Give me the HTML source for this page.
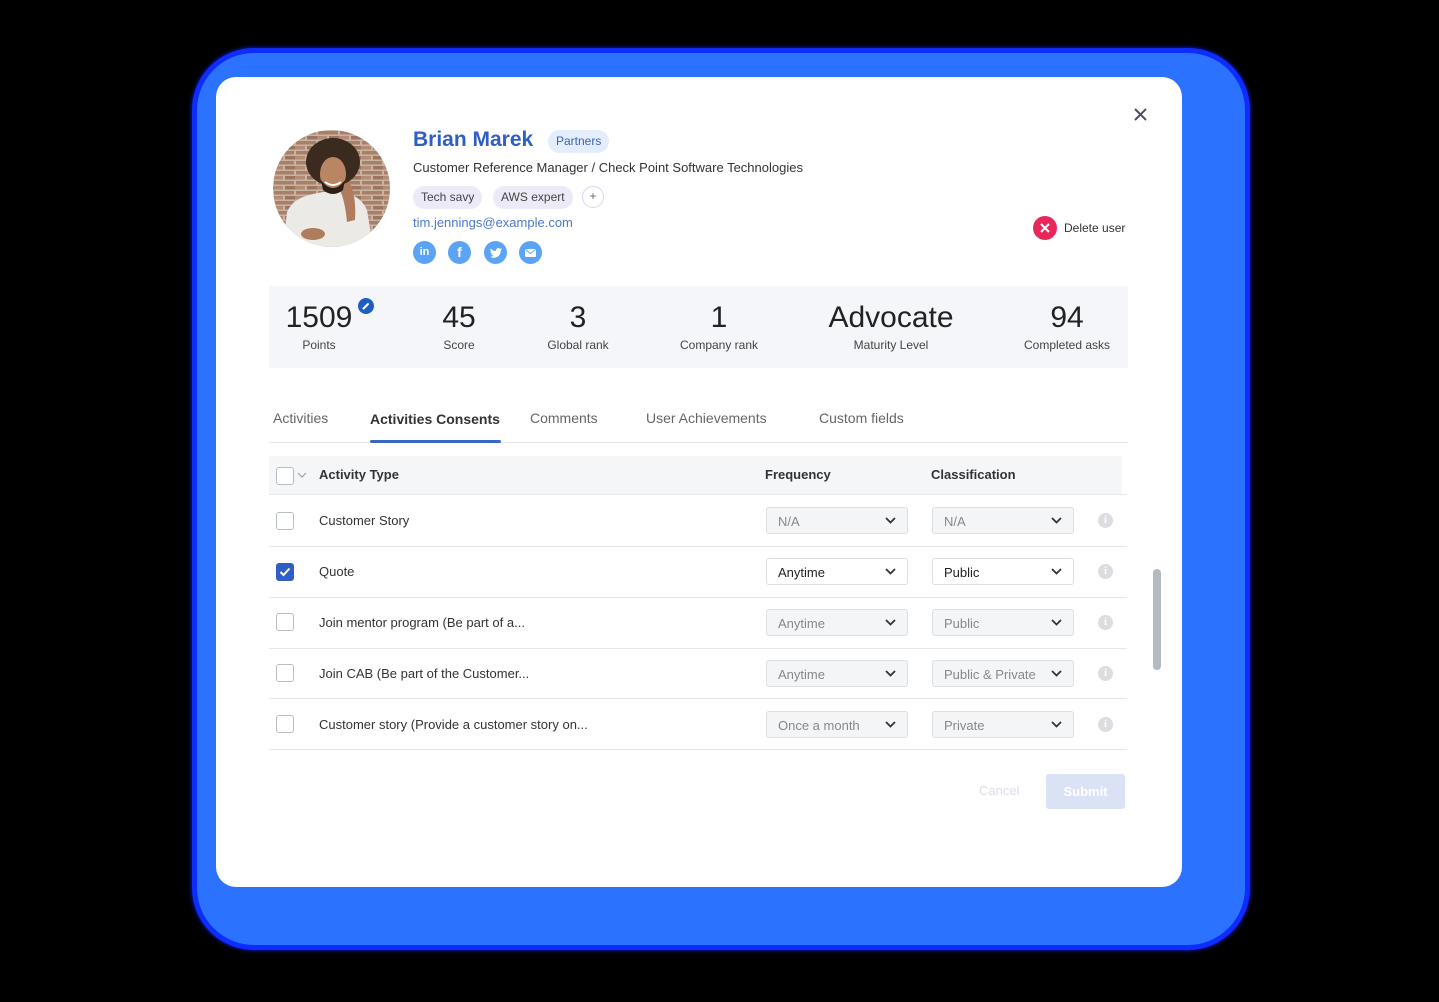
<!DOCTYPE html>
<html><head><meta charset="utf-8"><style>
*{box-sizing:border-box;margin:0;padding:0}
body{width:1439px;height:1002px;background:#000;position:relative;overflow:hidden;font-family:"Liberation Sans",sans-serif;color:#333}
.a{position:absolute}
.glow{left:192px;top:48px;width:1058px;height:902px;border-radius:62px;background:#2a72ff;border:5px solid #0d2cff;box-shadow:0 0 4px #0a20ff}
.card{left:216px;top:77px;width:966px;height:810px;border-radius:20px;background:#fff}
.c{text-align:center;transform:translateX(-50%)}
.num{font-size:30px;color:#222;top:301px;font-weight:300}
.lbl{font-size:12px;color:#444;top:338px}
.tab{top:410px;font-size:14px;color:#666}
.cb{left:276px;width:18px;height:18px;border:1.5px solid #b8bcc4;border-radius:3px;background:#fff}
.row{left:319px;font-size:13px;color:#333}
.sel{height:27px;border:1px solid #dcdfe4;border-radius:3px;background:#f4f5f7;font-size:13px;color:#888;padding:6px 0 0 11px}
.sel.on{background:#fff;color:#222}
.sel svg{position:absolute;right:11px;top:9px}
.sep{left:269px;width:858px;height:1px;background:#e6e8ec}
.info{left:1098px;width:15px;height:15px;border-radius:50%;background:#dcdde0;color:#fff;font-size:10px;font-weight:bold;text-align:center;line-height:15px;font-family:"Liberation Serif",serif}
.soc{top:241px;width:23px;height:23px;border-radius:50%;background:#5ba4f5;color:#fff;font-size:12px;font-weight:bold;text-align:center;line-height:23px}
.tag{top:186px;height:23px;border-radius:12px;background:#eceaf7;font-size:12px;color:#444;padding:4px 8px 0}
</style></head><body>
<div class="a glow"></div>
<div class="a card"></div>

<svg class="a" style="left:273px;top:130px" width="117" height="117" viewBox="0 0 117 117">
<defs><clipPath id="cp"><circle cx="58.5" cy="58.5" r="58.5"/></clipPath>
<pattern id="br" width="22" height="10" patternUnits="userSpaceOnUse"><rect width="22" height="10" fill="#c9b3a3"/><rect x="1" y="1" width="20" height="3.5" fill="#a8806a"/><rect x="-10" y="6" width="20" height="3.5" fill="#b48b75"/><rect x="12" y="6" width="20" height="3.5" fill="#9c7561"/></pattern></defs>
<g clip-path="url(#cp)">
<rect width="117" height="117" fill="url(#br)"/>
<path d="M10 117 L14 82 Q20 68 40 64 L50 62 L70 62 Q88 66 94 80 L100 117Z" fill="#eceae6"/>
<path d="M72 45 Q84 60 82 90 L74 92 Q72 70 66 58Z" fill="#b07c5e"/>
<ellipse cx="60" cy="32" rx="27" ry="24" fill="#3b2a1e"/>
<ellipse cx="60" cy="44" rx="13" ry="17" fill="#b98563"/>
<path d="M48 50 Q60 66 72 50 L70 60 Q60 68 50 60Z" fill="#2b1f17"/>
<path d="M52 52 Q60 58 68 52" stroke="#fff" stroke-width="2" fill="none"/>
<ellipse cx="40" cy="104" rx="12" ry="6" fill="#b07c5e"/>
</g></svg>

<div class="a" style="left:413px;top:128px;font-size:21px;font-weight:bold;color:#2f5fc4">Brian Marek</div>
<div class="a" style="left:548px;top:130px;height:23px;padding:4px 8px 0;border-radius:12px;background:#e3edfc;color:#3a63c0;font-size:12px">Partners</div>
<div class="a" style="left:413px;top:160px;font-size:13px;color:#333">Customer Reference Manager / Check Point Software Technologies</div>
<div class="a tag" style="left:413px">Tech savy</div>
<div class="a tag" style="left:493px">AWS expert</div>
<div class="a" style="left:582px;top:186px;width:22px;height:22px;border-radius:50%;border:1.5px solid #d8d4f0;font-size:12px;color:#666;text-align:center;line-height:19px">+</div>
<div class="a" style="left:413px;top:215px;font-size:13px;color:#4b78d0">tim.jennings@example.com</div>
<div class="a soc" style="left:413px;font-size:11px">in</div>
<div class="a soc" style="left:448px;font-size:14px">f</div>
<div class="a soc" style="left:484px"><svg width="12" height="10" style="margin-top:7px" viewBox="0 0 24 20"><path d="M24 2.4a10 10 0 0 1-2.8.8A5 5 0 0 0 23.3.4a10 10 0 0 1-3.1 1.2A5 5 0 0 0 11.8 6 14 14 0 0 1 1.7.9a5 5 0 0 0 1.5 6.6 5 5 0 0 1-2.2-.6 5 5 0 0 0 4 4.9 5 5 0 0 1-2.2.1 5 5 0 0 0 4.6 3.4A10 10 0 0 1 0 17.4 14 14 0 0 0 7.5 19.6c9 0 14-7.5 14-14v-.6A10 10 0 0 0 24 2.4z" fill="#fff"/></svg></div>
<div class="a soc" style="left:519px"><svg width="11" height="8" style="margin-top:8px"><rect width="11" height="8" rx="1" fill="#fff"/><path d="M0.5 0.5L5.5 4.5L10.5 0.5" stroke="#5ba4f5" fill="none"/></svg></div>

<svg class="a" style="left:1133px;top:107px" width="15" height="15"><path d="M2 2L13 13M13 2L2 13" stroke="#4a4e5e" stroke-width="2"/></svg>
<div class="a" style="left:1033px;top:216px;width:24px;height:24px;border-radius:50%;background:#e8285a"></div>
<svg class="a" style="left:1039px;top:222px" width="12" height="12"><path d="M2 2L10 10M10 2L2 10" stroke="#fff" stroke-width="2"/></svg>
<div class="a" style="left:1064px;top:221px;font-size:12px;color:#333">Delete user</div>

<div class="a" style="left:269px;top:286px;width:859px;height:82px;background:#f4f6f9"></div>
<div class="a c num" style="left:319px">1509</div>
<div class="a" style="left:358px;top:298px;width:16px;height:16px;border-radius:50%;background:#1f5fc4"></div>
<svg class="a" style="left:361px;top:301px" width="10" height="10"><path d="M2.5 7.5L7 3" stroke="#fff" stroke-width="2" stroke-linecap="round"/></svg>
<div class="a c num" style="left:459px">45</div>
<div class="a c num" style="left:578px">3</div>
<div class="a c num" style="left:719px">1</div>
<div class="a c num" style="left:891px">Advocate</div>
<div class="a c num" style="left:1067px">94</div>
<div class="a c lbl" style="left:319px">Points</div>
<div class="a c lbl" style="left:459px">Score</div>
<div class="a c lbl" style="left:578px">Global rank</div>
<div class="a c lbl" style="left:719px">Company rank</div>
<div class="a c lbl" style="left:891px">Maturity Level</div>
<div class="a c lbl" style="left:1067px">Completed asks</div>

<div class="a tab" style="left:273px">Activities</div>
<div class="a tab" style="left:370px;color:#333;font-weight:bold;top:411px">Activities Consents</div>
<div class="a tab" style="left:530px">Comments</div>
<div class="a tab" style="left:646px">User Achievements</div>
<div class="a tab" style="left:819px">Custom fields</div>
<div class="a" style="left:269px;top:442px;width:859px;height:1px;background:#e6e8ec"></div>
<div class="a" style="left:370px;top:440px;width:131px;height:3px;background:#3a66c6;border-radius:2px"></div>

<div class="a" style="left:269px;top:456px;width:853px;height:38px;background:#f5f6f8"></div>
<div class="a cb" style="top:467px"></div>
<svg class="a" style="left:297px;top:472px" width="10" height="6"><path d="M1 1L5 5L9 1" stroke="#999" fill="none"/></svg>
<div class="a" style="left:319px;top:467px;font-size:13px;font-weight:bold;color:#333">Activity Type</div>
<div class="a" style="left:765px;top:467px;font-size:13px;font-weight:bold;color:#333">Frequency</div>
<div class="a" style="left:931px;top:467px;font-size:13px;font-weight:bold;color:#333">Classification</div>
<div class="a sep" style="top:494px"></div>

<div class="a cb" style="top:512px"></div>
<div class="a row" style="top:513px">Customer Story</div>
<div class="a sel" style="left:766px;top:507px;width:142px">N/A<svg width="11" height="7"><path d="M1 1L5.5 5.5L10 1" stroke="#333" stroke-width="1.8" fill="none"/></svg></div>
<div class="a sel" style="left:932px;top:507px;width:142px">N/A<svg width="11" height="7"><path d="M1 1L5.5 5.5L10 1" stroke="#333" stroke-width="1.8" fill="none"/></svg></div>
<div class="a info" style="top:513px">i</div>
<div class="a sep" style="top:546px"></div>

<div class="a cb" style="top:563px;background:#2f5fc4;border-color:#2f5fc4"></div>
<svg class="a" style="left:279px;top:567px" width="12" height="10"><path d="M1.5 5L4.5 8L10.5 1.5" stroke="#fff" stroke-width="2" fill="none"/></svg>
<div class="a row" style="top:564px">Quote</div>
<div class="a sel on" style="left:766px;top:558px;width:142px">Anytime<svg width="11" height="7"><path d="M1 1L5.5 5.5L10 1" stroke="#333" stroke-width="1.8" fill="none"/></svg></div>
<div class="a sel on" style="left:932px;top:558px;width:142px">Public<svg width="11" height="7"><path d="M1 1L5.5 5.5L10 1" stroke="#333" stroke-width="1.8" fill="none"/></svg></div>
<div class="a info" style="top:564px">i</div>
<div class="a sep" style="top:597px"></div>

<div class="a cb" style="top:613px"></div>
<div class="a row" style="top:615px">Join mentor program (Be part of a...</div>
<div class="a sel" style="left:766px;top:609px;width:142px">Anytime<svg width="11" height="7"><path d="M1 1L5.5 5.5L10 1" stroke="#333" stroke-width="1.8" fill="none"/></svg></div>
<div class="a sel" style="left:932px;top:609px;width:142px">Public<svg width="11" height="7"><path d="M1 1L5.5 5.5L10 1" stroke="#333" stroke-width="1.8" fill="none"/></svg></div>
<div class="a info" style="top:615px">i</div>
<div class="a sep" style="top:648px"></div>

<div class="a cb" style="top:664px"></div>
<div class="a row" style="top:666px">Join CAB (Be part of the Customer...</div>
<div class="a sel" style="left:766px;top:660px;width:142px">Anytime<svg width="11" height="7"><path d="M1 1L5.5 5.5L10 1" stroke="#333" stroke-width="1.8" fill="none"/></svg></div>
<div class="a sel" style="left:932px;top:660px;width:142px">Public &amp; Private<svg width="11" height="7"><path d="M1 1L5.5 5.5L10 1" stroke="#333" stroke-width="1.8" fill="none"/></svg></div>
<div class="a info" style="top:666px">i</div>
<div class="a sep" style="top:698px"></div>

<div class="a cb" style="top:715px"></div>
<div class="a row" style="top:717px">Customer story (Provide a customer story on...</div>
<div class="a sel" style="left:766px;top:711px;width:142px">Once a month<svg width="11" height="7"><path d="M1 1L5.5 5.5L10 1" stroke="#333" stroke-width="1.8" fill="none"/></svg></div>
<div class="a sel" style="left:932px;top:711px;width:142px">Private<svg width="11" height="7"><path d="M1 1L5.5 5.5L10 1" stroke="#333" stroke-width="1.8" fill="none"/></svg></div>
<div class="a info" style="top:717px">i</div>
<div class="a sep" style="top:749px"></div>

<div class="a" style="left:1153px;top:569px;width:8px;height:101px;border-radius:4px;background:#b5b9c0"></div>

<div class="a" style="left:979px;top:783px;font-size:13px;color:#dcdcf0">Cancel</div>
<div class="a" style="left:1046px;top:774px;width:79px;height:35px;border-radius:3px;background:#dbe2f5;color:#fff;font-size:13px;font-weight:bold;text-align:center;line-height:35px">Submit</div>
</body></html>
